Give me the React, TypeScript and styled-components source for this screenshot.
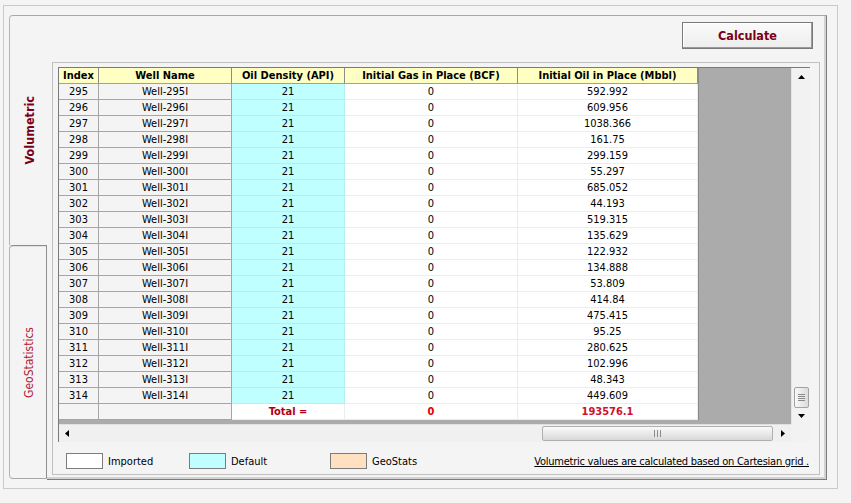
import React from 'react'
import styled, { createGlobalStyle } from 'styled-components'

const FONT = `"DejaVu Sans Condensed", "DejaVu Sans", "Liberation Sans", sans-serif`

const GlobalStyle = createGlobalStyle`
  html, body {
    margin: 0;
    padding: 0;
    background: #f4f4f4;
  }
  body {
    font-family: ${FONT};
    font-size: 11px;
    color: #000;
  }
`

type Kind = 'fixed' | 'default' | 'imported'

const columns: { title: string; width: number; kind: Kind }[] = [
  { title: 'Index', width: 40, kind: 'fixed' },
  { title: 'Well Name', width: 133, kind: 'fixed' },
  { title: 'Oil Density (API)', width: 113, kind: 'default' },
  { title: 'Initial Gas in Place (BCF)', width: 173, kind: 'imported' },
  { title: 'Initial Oil in Place (Mbbl)', width: 180, kind: 'imported' },
]

const oilValues = [
  '592.992', '609.956', '1038.366', '161.75', '299.159', '55.297', '685.052',
  '44.193', '519.315', '135.629', '122.932', '134.888', '53.809', '414.84',
  '475.415', '95.25', '280.625', '102.996', '48.343', '449.609',
]

const rows = oilValues.map((oil, i) => {
  const idx = 295 + i
  return [String(idx), `Well-${idx}I`, '21', '0', oil]
})

const ArrowUp = () => (
  <svg width="7" height="4" viewBox="0 0 7 4">
    <path d="M0 4 L3.5 0 L7 4 Z" fill="#000" />
  </svg>
)
const ArrowDown = () => (
  <svg width="7" height="4" viewBox="0 0 7 4">
    <path d="M0 0 L3.5 4 L7 0 Z" fill="#000" />
  </svg>
)
const ArrowLeft = () => (
  <svg width="4" height="7" viewBox="0 0 4 7">
    <path d="M4 0 L0 3.5 L4 7 Z" fill="#000" />
  </svg>
)
const ArrowRight = () => (
  <svg width="4" height="7" viewBox="0 0 4 7">
    <path d="M0 0 L4 3.5 L0 7 Z" fill="#000" />
  </svg>
)

export default function App() {
  return (
    <>
      <GlobalStyle />
      <Frame>
        <Tabs>
          <Tab $active>
            <TabLabel $active>Volumetric</TabLabel>
          </Tab>
          <Tab>
            <TabLabel>GeoStatistics</TabLabel>
          </Tab>
        </Tabs>

        <Panel>
          <CalcButton>Calculate</CalcButton>
          <Group>
            <Grid>
              <GridTop>
                <View>
                  <Sheet>
                    <Row>
                      {columns.map((c) => (
                        <HeadCell key={c.title}>{c.title}</HeadCell>
                      ))}
                    </Row>
                    {rows.map((r) => (
                      <Row key={r[0]}>
                        {r.map((v, j) => (
                          <Cell key={j} $kind={columns[j].kind}>
                            {v}
                          </Cell>
                        ))}
                      </Row>
                    ))}
                    <Row>
                      <Cell $kind="fixed" />
                      <Cell $kind="fixed" />
                      <TotalCell $color="#b00010">Total =</TotalCell>
                      <TotalCell $color="#e00000">0</TotalCell>
                      <TotalCell $color="#d0102e">193576.1</TotalCell>
                    </Row>
                  </Sheet>
                </View>
                <VScroll>
                  <VArrow $h={17}>
                    <ArrowUp />
                  </VArrow>
                  <Spacer />
                  <VThumb>
                    <svg width="7" height="8" viewBox="0 0 7 8">
                      <path d="M0 0.5H7M0 2.5H7M0 4.5H7M0 6.5H7" stroke="#8a8a8a" strokeWidth="1" />
                    </svg>
                  </VThumb>
                  <VArrow $h={16}>
                    <ArrowDown />
                  </VArrow>
                </VScroll>
              </GridTop>
              <GridBottom>
                <HScroll>
                  <HArrow>
                    <ArrowLeft />
                  </HArrow>
                  <Spacer />
                  <HThumb>
                    <svg width="7" height="7" viewBox="0 0 7 7">
                      <path d="M0.5 0V7M3.5 0V7M6.5 0V7" stroke="#8a8a8a" strokeWidth="1" />
                    </svg>
                  </HThumb>
                  <HArrow>
                    <ArrowRight />
                  </HArrow>
                </HScroll>
                <Corner />
              </GridBottom>
            </Grid>

            <Legend>
              <LegendItem $w={123}>
                <Swatch $color="#ffffff" />
                Imported
              </LegendItem>
              <LegendItem $w={141}>
                <Swatch $color="#c0ffff" />
                Default
              </LegendItem>
              <LegendItem>
                <Swatch $color="#ffe0c0" />
                GeoStats
              </LegendItem>
              <Note>Volumetric values are calculated based on Cartesian grid .</Note>
            </Legend>
          </Group>
        </Panel>
      </Frame>
    </>
  )
}

const Frame = styled.div`
  box-sizing: border-box;
  margin: 5px 0 0 3px;
  width: 835px;
  height: 484px;
  border: 1px solid #cacaca;
  padding: 9px 10px 8px 5px;
  display: flex;
`

const Tabs = styled.div`
  width: 38px;
  display: flex;
  flex-direction: column;
`

const Tab = styled.div<{ $active?: boolean }>`
  box-sizing: border-box;
  display: flex;
  align-items: center;
  justify-content: center;
  background: #f4f4f4;
  border-left: 1px solid #b4b4b4;
  border-top: 1px solid ${(p) => (p.$active ? '#a8a8a8' : '#8c8c8c')};
  ${(p) =>
    p.$active
      ? `
    height: 230px;
    border-top-left-radius: 4px;
  `
      : `
    flex: 1;
    margin-bottom: 1px;
    border-right: 1px solid #8c8c8c;
    border-bottom: 1px solid #a8a8a8;
    border-radius: 4px 0 0 4px;
    box-shadow: inset 0 1px 0 #e2e2e2;
  `}
`

const TabLabel = styled.span<{ $active?: boolean }>`
  writing-mode: vertical-rl;
  transform: rotate(180deg);
  font-size: ${(p) => (p.$active ? '12.5px' : '12px')};
  font-weight: ${(p) => (p.$active ? 700 : 400)};
  color: ${(p) => (p.$active ? '#7a0018' : '#b31a34')};
  margin-left: 2px;
`

const Panel = styled.div`
  box-sizing: border-box;
  flex: 1;
  display: flex;
  flex-direction: column;
  border-top: 1px solid #a8a8a8;
  border-right: 1px solid #7c7c7c;
  border-bottom: 1px solid #7c7c7c;
  box-shadow: inset -2px -2px 0 #d2d2d2;
  padding: 6px 6px 4px 5px;
`

const CalcButton = styled.button`
  align-self: flex-end;
  margin-right: 7px;
  box-sizing: border-box;
  width: 131px;
  height: 27px;
  padding: 0;
  border: 1px solid #7a7a7a;
  box-shadow: inset -1px -1px 0 #9a9a9a, inset 1px 1px 0 #ffffff;
  background: linear-gradient(#fafafa, #ededed);
  font-family: ${FONT};
  font-size: 12.5px;
  font-weight: 700;
  color: #7a0018;
`

const Group = styled.div`
  box-sizing: border-box;
  flex: 1;
  margin-top: 13px;
  border: 1px solid #c0c0c0;
  padding: 4px 9px 0 5px;
  display: flex;
  flex-direction: column;
`

const Grid = styled.div`
  box-sizing: border-box;
  height: 375px;
  border-top: 1px solid #7a7a7a;
  border-left: 1px solid #7a7a7a;
  display: flex;
  flex-direction: column;
`

const GridTop = styled.div`
  flex: 1;
  display: flex;
  min-height: 0;
`

const View = styled.div`
  flex: 1;
  background: #ababab;
  overflow: hidden;
`

const Sheet = styled.div`
  width: 639px;
  background: #fff;
  border-right: 1px solid #8a8a8a;
`

const Row = styled.div`
  display: grid;
  grid-template-columns: ${columns.map((c) => `${c.width}px`).join(' ')};
  height: 16px;
`

const HeadCell = styled.div`
  box-sizing: border-box;
  background: #ffffc4;
  border-right: 1px solid #8c8c8c;
  border-bottom: 1px solid #a0a0a0;
  font-weight: 700;
  text-align: center;
  line-height: 16px;
  white-space: nowrap;
  overflow: hidden;
`

const cellBg: Record<Kind, string> = {
  fixed: '#f4f4f4',
  default: '#c0ffff',
  imported: '#ffffff',
}

const cellLine: Record<Kind, string> = {
  fixed: '#a6a6a6',
  default: '#b4f0f0',
  imported: '#ececec',
}

const Cell = styled.div<{ $kind: Kind }>`
  box-sizing: border-box;
  background: ${(p) => cellBg[p.$kind]};
  border-right: 1px solid ${(p) => cellLine[p.$kind]};
  border-bottom: 1px solid ${(p) => cellLine[p.$kind]};
  text-align: center;
  line-height: 16px;
  white-space: nowrap;
  overflow: hidden;
`

const TotalCell = styled.div<{ $color: string }>`
  box-sizing: border-box;
  background: #fff;
  border-right: 1px solid #ececec;
  border-bottom: 1px solid #ececec;
  text-align: center;
  line-height: 16px;
  overflow: hidden;
  font-weight: 700;
  color: ${(p) => p.$color};
`

const VScroll = styled.div`
  width: 18px;
  display: flex;
  flex-direction: column;
  align-items: center;
  background: #f2f2f2;
  border-left: 1px solid #e4e4e4;
`

const VArrow = styled.div<{ $h: number }>`
  height: ${(p) => p.$h}px;
  display: flex;
  align-items: center;
  justify-content: center;
`

const Spacer = styled.div`
  flex: 1;
`

const VThumb = styled.div`
  box-sizing: border-box;
  width: 15px;
  height: 21px;
  border: 1px solid #a2a2a2;
  border-radius: 2px;
  background: linear-gradient(to right, #f8f8f8, #dcdcdc);
  display: flex;
  align-items: center;
  justify-content: center;
`

const GridBottom = styled.div`
  height: 18px;
  display: flex;
`

const HScroll = styled.div`
  flex: 1;
  display: flex;
  align-items: center;
  background: #f0f0f0;
  border-top: 1px solid #e0e0e0;
`

const HArrow = styled.div`
  width: 16px;
  height: 100%;
  display: flex;
  align-items: center;
  justify-content: center;
`

const HThumb = styled.div`
  box-sizing: border-box;
  width: 231px;
  height: 15px;
  margin-right: 2px;
  border: 1px solid #b0b0b0;
  border-radius: 2px;
  background: linear-gradient(#fafafa, #d8d8d8);
  display: flex;
  align-items: center;
  justify-content: center;
`

const Corner = styled.div`
  width: 19px;
  background: #f2f2f2;
`

const Legend = styled.div`
  margin-top: 11px;
  margin-left: 8px;
  height: 16px;
  display: flex;
  align-items: center;
`

const LegendItem = styled.div<{ $w?: number }>`
  display: flex;
  align-items: center;
  gap: 5px;
  width: ${(p) => (p.$w ? `${p.$w}px` : 'auto')};
`

const Swatch = styled.span<{ $color: string }>`
  box-sizing: border-box;
  width: 37px;
  height: 16px;
  background: ${(p) => p.$color};
  border: 1px solid #7c7c7c;
`

const Note = styled.span`
  margin-left: auto;
  margin-right: 1px;
  text-decoration: underline;
  white-space: nowrap;
  letter-spacing: -0.25px;
`
